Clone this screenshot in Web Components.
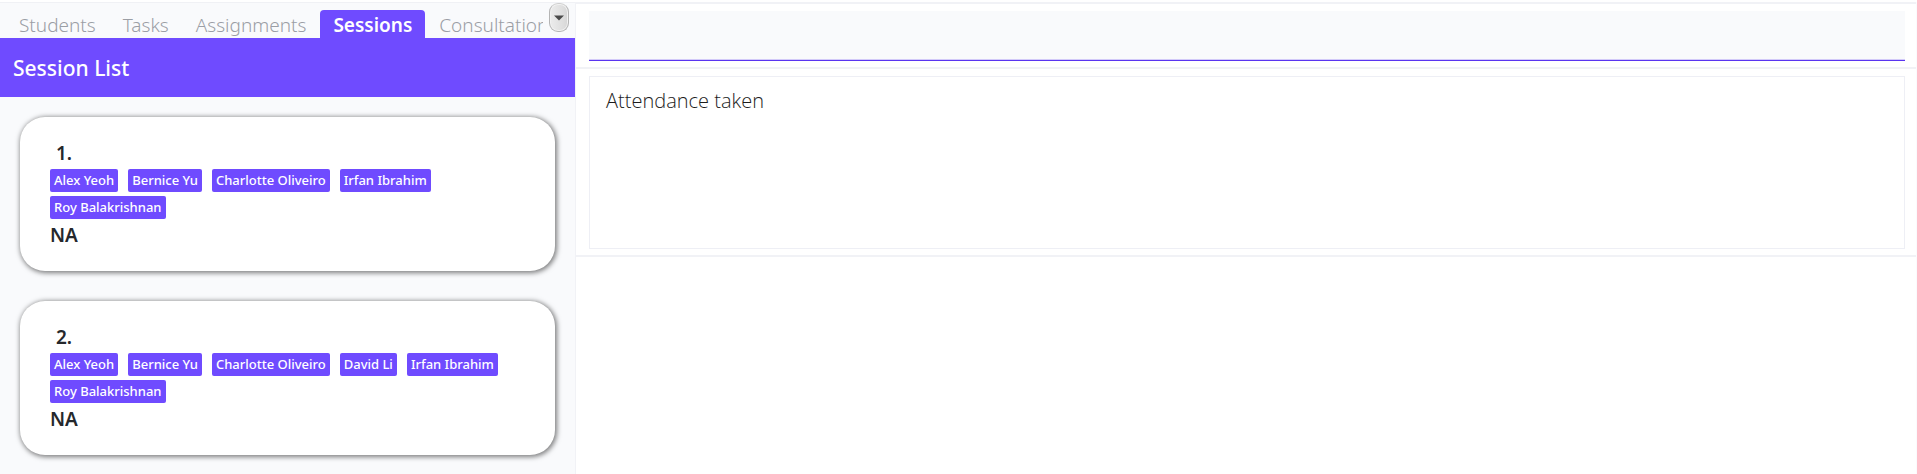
<!DOCTYPE html>
<html lang="en">
<head>
<meta charset="utf-8">
<title>Session List</title>
<style>
  html, body { margin: 0; background: #fff; }
  body { font-family: "Noto Sans", "Open Sans", sans-serif; color: #25282c; }
</style>
</head>
<body>
<app-shell>
  <side-panel slot="side">
    <tab-strip slot="tabs">
      <tab-item>Students</tab-item>
      <tab-item>Tasks</tab-item>
      <tab-item>Assignments</tab-item>
      <tab-item active>Sessions</tab-item>
      <tab-item>Consultations</tab-item>
    </tab-strip>
    <panel-title slot="title">Session List</panel-title>
    <session-card>
      <span slot="index">1.</span>
      <name-chip>Alex Yeoh</name-chip>
      <name-chip>Bernice Yu</name-chip>
      <name-chip>Charlotte Oliveiro</name-chip>
      <name-chip>Irfan Ibrahim</name-chip>
      <name-chip>Roy Balakrishnan</name-chip>
      <span slot="note">NA</span>
    </session-card>
    <session-card>
      <span slot="index">2.</span>
      <name-chip>Alex Yeoh</name-chip>
      <name-chip>Bernice Yu</name-chip>
      <name-chip>Charlotte Oliveiro</name-chip>
      <name-chip>David Li</name-chip>
      <name-chip>Irfan Ibrahim</name-chip>
      <name-chip>Roy Balakrishnan</name-chip>
      <span slot="note">NA</span>
    </session-card>
  </side-panel>
  <detail-section><command-box></command-box></detail-section>
  <detail-section><result-box value="Attendance taken"></result-box></detail-section>
  <detail-section></detail-section>
</app-shell>

<script>
  function define(name, html, setup) {
    customElements.define(name, class extends HTMLElement {
      constructor() {
        super();
        this.attachShadow({ mode: "open" }).innerHTML = html;
      }
      connectedCallback() {
        if (setup) setup(this, this.shadowRoot);
      }
    });
  }

  define("app-shell", `
    <style>
      :host { display: grid; grid-template-columns: 30% 1fr; min-height: 100vh; box-sizing: border-box; padding-top: 2px; }
      main { min-width: 0; border-left: 1px solid #f1f2f6; border-right: 1px solid #fafbfd; }
    </style>
    <slot name="side"></slot>
    <main><slot></slot></main>`);

  define("side-panel", `
    <style>
      :host { display: block; min-width: 0; background: #f9fafc; border-top: 1px solid #f0f1f5; }
      .cards { display: flex; flex-direction: column; gap: 30px; padding: 20px 20px 18px; }
    </style>
    <slot name="tabs"></slot>
    <slot name="title"></slot>
    <div class="cards"><slot></slot></div>`);

  define("tab-strip", `
    <style>
      :host { display: flex; align-items: flex-end; height: 35px; padding: 0 6px; }
      nav { display: flex; gap: 1px; flex: 1; min-width: 0; overflow: hidden; margin-right: 6px; }
      button {
        align-self: flex-start; width: 20px; height: 29px; padding: 0;
        display: grid; place-items: center;
        border: 1px solid #b4b4b4; border-top-color: #cfcfcf; border-radius: 9px;
        background: linear-gradient(90deg, #ececec, #dedede 70%, #d6d6d6);
        box-shadow: inset 0 0 0 1px #f1f1f1;
      }
    </style>
    <nav aria-label="Views"><slot></slot></nav>
    <button type="button" aria-label="Show all tabs">
      <svg width="10" height="6" viewBox="0 0 10 6" aria-hidden="true"><path d="M0 0.5H10L5 5.5Z" fill="#4a4a4a"/></svg>
    </button>`);

  define("tab-item", `
    <style>
      :host { display: block; flex: none; }
      a {
        display: block; height: 28px; line-height: 30px; padding: 0 13px;
        font-size: 19px; font-weight: 300; color: #9b9ea5; text-decoration: none; white-space: nowrap;
      }
      :host([active]) a { background: #6f4bff; color: #fff; font-weight: 600; border-radius: 4px 4px 0 0; }
    </style>
    <a href="#"><slot></slot></a>`);

  define("panel-title", `
    <style>
      :host { display: block; background: #6f4bff; color: #fff; padding: 2px 13px 0; }
      h1 { margin: 0; font-size: 21px; font-weight: 500; line-height: 57px; }
    </style>
    <h1><slot></slot></h1>`);

  define("session-card", `
    <style>
      :host {
        display: block; background: #fff; padding: 24px 30px; border-radius: 25px;
        box-shadow: 1px 1px 5px 1px rgba(0, 0, 0, .5);
        font-size: 19px; font-weight: 600; line-height: 24px;
      }
      .index { padding-left: 6px; }
      .chips { display: flex; flex-wrap: wrap; gap: 4px 10px; margin: 4px 0; }
    </style>
    <div class="index"><slot name="index"></slot></div>
    <div class="chips"><slot></slot></div>
    <div><slot name="note"></slot></div>`);

  define("name-chip", `
    <style>
      :host {
        display: block; padding: 0 4px; border-radius: 2px; background: #6f4bff; color: #fff;
        font-size: 13px; font-weight: 500; line-height: 23px; white-space: nowrap;
      }
    </style>
    <slot></slot>`);

  define("detail-section", `
    <style>
      :host { display: block; border-top: 2px solid #f1f2f6; padding: 7px 11px 6px 13px; }
    </style>
    <slot></slot>`);

  define("command-box", `
    <style>
      :host { display: block; }
      input {
        display: block; box-sizing: border-box; width: 100%; height: 50px; padding: 0 14px;
        border: 0; border-bottom: 1px solid #5a34f0; border-radius: 0; outline: 0;
        background: #f9fafc; box-shadow: inset 0 -1px #d3caf9; font: 300 20px "Open Sans", sans-serif; color: inherit;
      }
    </style>
    <input type="text" aria-label="Command">`);

  define("result-box", `
    <style>
      :host { display: block; }
      textarea {
        display: block; box-sizing: border-box; width: 100%; height: 173px; padding: 10px 16px;
        border: 1px solid #eeeff5; border-radius: 0; outline: 0; resize: none; background: #fff;
        font: 300 20px/28px "Open Sans", sans-serif; color: #1c1c1c;
      }
    </style>
    <textarea readonly aria-label="Result"></textarea>`,
    (host, root) => { root.querySelector("textarea").value = host.getAttribute("value"); });
</script>
</body>
</html>
